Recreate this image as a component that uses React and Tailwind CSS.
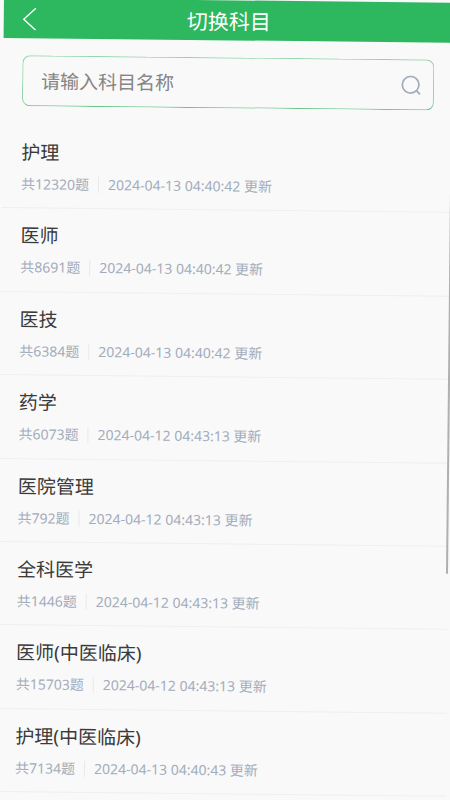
import React from 'react';

const subjects = [
    { name: '护理', count: 12320, updated: '2024-04-13 04:40:42' },
    { name: '医师', count: 8691, updated: '2024-04-13 04:40:42' },
    { name: '医技', count: 6384, updated: '2024-04-13 04:40:42' },
    { name: '药学', count: 6073, updated: '2024-04-12 04:43:13' },
    { name: '医院管理', count: 792, updated: '2024-04-12 04:43:13' },
    { name: '全科医学', count: 1446, updated: '2024-04-12 04:43:13' },
    { name: '医师(中医临床)', count: 15703, updated: '2024-04-12 04:43:13' },
    { name: '护理(中医临床)', count: 7134, updated: '2024-04-13 04:40:43' },
];

const Header = () => (
    <header className="relative flex h-10 shrink-0 items-center justify-center bg-[#2db75f] pt-0.5 text-white">
        <button type="button" aria-label="返回" className="absolute left-4 top-2 flex h-6 w-6 items-center">
            <svg viewBox="0 0 24 24" className="h-6 w-6" fill="none" stroke="currentColor" strokeWidth="1.4">
                <path d="M16 2 L4 13 L16 24" />
            </svg>
        </button>
        <h1 className="text-[21px] leading-7">切换科目</h1>
    </header>
);

const SearchBox = () => (
    <div className="px-[19px] pt-[17px] pb-[19px]">
        <div className="flex h-[51px] items-center rounded-lg border border-[#8fd4a9] border-b-[#68c48b] pr-3 pl-[18px]">
            <input
                type="search"
                aria-label="请输入科目名称"
                placeholder="请输入科目名称"
                className="min-w-0 flex-1 bg-transparent text-[19px] leading-7 text-[#333333] outline-none placeholder:text-[#858585]"
            />
            <button type="button" aria-label="搜索" className="text-[#a5adbb]">
                <svg viewBox="0 0 20 20" className="h-5 w-5" fill="none" stroke="currentColor" strokeWidth="1.8">
                    <circle cx="9.500" cy="9.500" r="8.300" />
                    <path d="M15.300 15.300 L19 19" />
                </svg>
            </button>
        </div>
    </div>
);

const SubjectRow = ({ name, count, updated }) => (
    <li className="flex-1 border-b border-[#efefef]">
        <a href="#" className="block px-[19px] pt-[13px]">
            <h2 className="text-[19px] leading-7 text-[#3a3a3a]">{name}</h2>
            <div className="mt-2 flex items-center text-sm leading-5 text-[#a3acbb]">
                <span>共{count}题</span>
                <span className="mx-[9px] h-4 w-px bg-[#e9e9ec]"></span>
                <span>{updated} 更新</span>
            </div>
        </a>
    </li>
);

const App = () => {
    return (
        <div className="h-screen overflow-hidden bg-[#f9f9f9] font-['Noto_Sans','Noto_Sans_CJK_SC',sans-serif]">
            <div className="relative flex h-full w-full origin-top-left translate-x-1 -translate-y-0.5 rotate-[0.6deg] flex-col pb-1.5">
                <Header />
                <SearchBox />
                <ul className="flex flex-1 flex-col">
                    {subjects.map((subject) => (
                        <SubjectRow key={subject.name} {...subject} />
                    ))}
                </ul>
                <div className="absolute top-10 right-0 h-[531px] w-0.5 bg-[#b0b0b0]"></div>
            </div>
        </div>
    );
};

export default App;
